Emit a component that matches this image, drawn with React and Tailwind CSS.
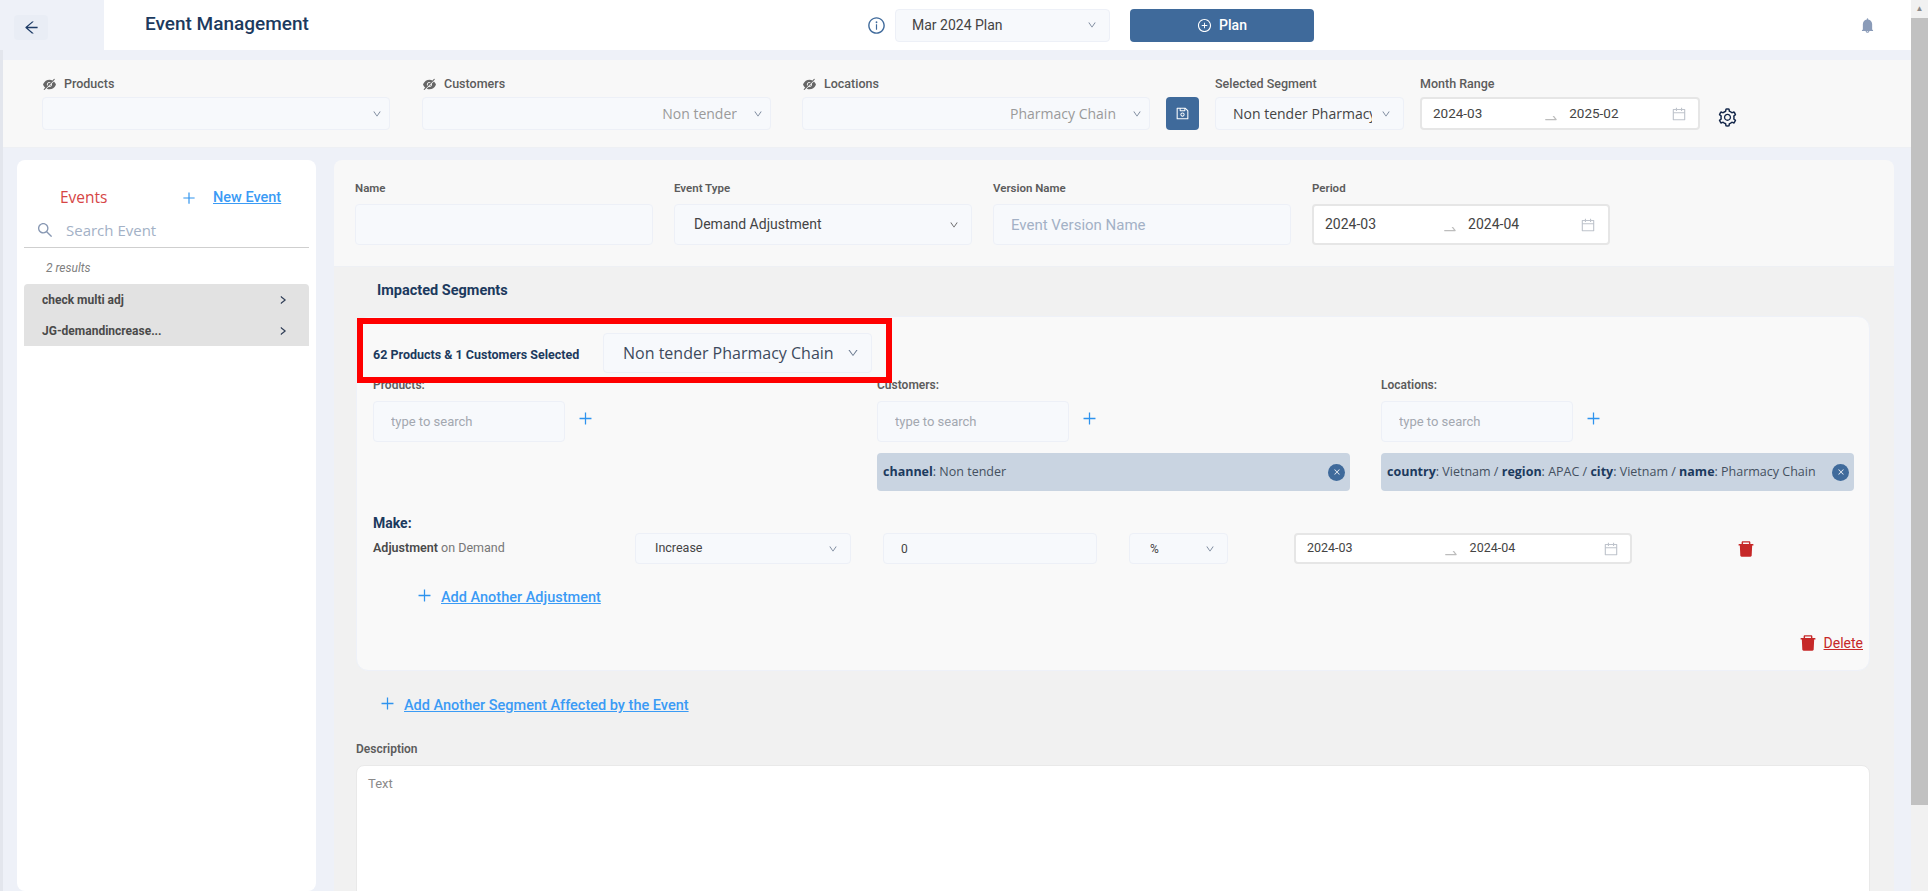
import React from 'react';
import {
  AiFillBell,
  AiFillDelete,
  AiFillEyeInvisible,
  AiOutlineArrowLeft,
  AiOutlineCalendar,
  AiOutlineClose,
  AiOutlineDown,
  AiOutlineInfoCircle,
  AiOutlinePlus,
  AiOutlinePlusCircle,
  AiOutlineRight,
  AiOutlineSave,
  AiOutlineSearch,
  AiOutlineSetting,
  AiOutlineSwapRight,
} from 'react-icons/ai';

const inputBox = 'flex items-center bg-[#f7f9fc] border border-[#edf0f7] rounded';
const formLabel = 'h-[14px] mb-[9px] leading-[14px] text-[11.5px] font-semibold text-[#5c5c5c]';
const filterLabel = 'h-[14px] mb-[6px] leading-[14px] text-[12.5px] font-medium text-[#5c5c5c]';

const Select = ({ value, className = '', textClass = '', right = false, chevron = 'text-[10px] text-[#6b7a90]' }) => (
  <div className={`${inputBox} ${className}`}>
    <span className={`flex-1 min-w-0 overflow-hidden whitespace-nowrap ${right ? 'text-right' : ''} ${textClass}`}>
      {value}
    </span>
    <AiOutlineDown className={`shrink-0 ${chevron}`} />
  </div>
);

const RangePicker = ({ from, to, className = '', toClass = '', arrowClass = '' }) => (
  <div className={`flex items-center bg-white border-2 border-[#e6e6e6] rounded-sm text-[#444] ${className}`}>
    <span>{from}</span>
    <AiOutlineSwapRight className={`text-[#bdbdbd] text-[16px] mt-2 ${arrowClass}`} />
    <span className={toClass}>{to}</span>
    <AiOutlineCalendar className="ml-auto text-[#bfc4cc] text-[16px]" />
  </div>
);

const FilterField = ({ label, value, className }) => (
  <div className={className}>
    <div className="flex items-center gap-[7px] h-[14px] mb-[6px] text-[12.5px] font-medium text-[#5c5c5c]">
      <AiFillEyeInvisible className="text-[15px] text-[#666]" />
      {label}
    </div>
    <Select
      value={value}
      right
      className="h-[33px] pl-3 pr-[7px] gap-[16px]"
      textClass="text-[14px] text-[#9a9a9a] font-['Open_Sans',sans-serif]"
    />
  </div>
);

const SearchField = ({ label, children }) => (
  <div>
    <div className="h-[14px] leading-[14px] text-[12px] font-semibold text-[#5c5c5c]">{label}</div>
    <div className="flex items-center mt-[9px]">
      <input
        placeholder="type to search"
        className={`${inputBox} w-[192px] h-[41px] pl-[17px] text-[13px] outline-none placeholder:text-[#a3a8b0]`}
      />
      <AiOutlinePlus className="ml-[12px] -mt-[6px] text-[17px] text-[#2e93ee]" />
    </div>
    {children}
  </div>
);

const Chip = ({ children }) => (
  <div className="flex items-center justify-between h-[38px] w-[473px] mt-[11px] pl-[6px] pr-[5px] bg-[#c9d4e1] rounded text-[12.5px] text-[#44505f] font-['Open_Sans',sans-serif]">
    <span>{children}</span>
    <span className="flex items-center justify-center w-[17px] h-[17px] rounded-full bg-[#3f6a9b] text-white">
      <AiOutlineClose className="text-[8px]" />
    </span>
  </div>
);

const AddLink = ({ children, className = '' }) => (
  <div className={`flex items-center gap-[8px] text-[14.5px] font-medium text-[#3b9bf5] ${className}`}>
    <AiOutlinePlus className="text-[17px] text-[#2e93ee] -mt-1" />
    <span className="underline">{children}</span>
  </div>
);

const EventRow = ({ name }) => (
  <div className="flex items-center justify-between h-[31px] pl-[18px] pr-[21px] text-[12px] font-bold text-[#4a4a4a]">
    {name}
    <AiOutlineRight className="text-[10px] text-[#1f2f4a] stroke-[40]" />
  </div>
);

export default function App() {
  return (
    <div className="flex w-[1928px] h-[891px] overflow-hidden bg-[#eef1f8] font-['Roboto',sans-serif]">
      <div className="w-[1911px] shrink-0 flex flex-col">
        {/* Top bar */}
        <header className="flex h-[50px] shrink-0">
          <div className="w-[104px] pl-[14px] pt-[15px] bg-[#eef1f8]">
            <div className="flex items-center justify-center w-[34px] h-[25px] bg-[#e9edf5] rounded text-[#1d3b66]">
              <AiOutlineArrowLeft className="text-[17px]" />
            </div>
          </div>
          <div className="flex-1 flex items-center bg-white pl-[41px]">
            <h1 className="w-[722px] -mt-[2px] text-[19px] font-medium text-[#1c3a5e] whitespace-nowrap">Event Management</h1>
            <AiOutlineInfoCircle className="text-[19px] text-[#3f6a9b]" />
            <Select
              value="Mar 2024 Plan"
              className="w-[215px] h-[33px] ml-[9px] pl-[16px] pr-[12px]"
              textClass="text-[14px] text-[#444]"
            />
            <button className="flex items-center justify-center gap-[7px] w-[184px] h-[33px] ml-[20px] bg-[#3f6a9b] rounded-sm text-white text-[14px] font-medium">
              <AiOutlinePlusCircle className="text-[15px]" />
              Plan
            </button>
            <AiFillBell className="ml-[545px] text-[17px] text-[#8a9bb8]" />
          </div>
        </header>

        <div className="flex-1 min-h-0 flex flex-col pt-[10px] border-l-[3px] border-[#e3e6ed]">
          {/* Filters */}
          <section className="flex h-[88px] shrink-0 pl-[39px] pt-[17px] bg-[#f8f8f8] border-b border-[#eef0f4]">
            <FilterField label="Products" value="" className="w-[348px]" />
            <FilterField label="Customers" value="Non tender" className="w-[349px] ml-[32px]" />
            <FilterField label="Locations" value="Pharmacy Chain" className="w-[348px] ml-[31px]" />
            <button className="flex items-center justify-center w-[33px] h-[33px] mt-[20px] ml-[16px] bg-[#3f6a9b] rounded text-white">
              <AiOutlineSave className="text-[15px]" />
            </button>
            <div className="w-[189px] ml-[16px]">
              <div className={filterLabel}>Selected Segment</div>
              <Select
                value="Non tender Pharmacy Chain"
                className="h-[33px] pl-[17px] pr-[12px] gap-[9px]"
                textClass="text-[14px] text-[#444] font-['Open_Sans',sans-serif]"
              />
            </div>
            <div className="w-[280px] ml-[16px]">
              <div className={filterLabel}>Month Range</div>
              <RangePicker
                from="2024-03"
                to="2025-02"
                className="h-[33px] pl-[11px] pr-[11px] text-[13.5px]"
                arrowClass="ml-[61px]"
                toClass="ml-[10px]"
              />
            </div>
            <AiOutlineSetting className="mt-[30px] ml-[17px] text-[21px] text-[#14274a]" />
          </section>

          <div className="flex-1 min-h-0 flex pt-[12px] pl-[14px] pr-[17px] gap-[18px]">
            {/* Events list */}
            <aside className="w-[299px] shrink-0 bg-white rounded-lg px-[7px]">
              <div className="flex items-center h-[56px] pt-[19px] pl-[36px]">
                <span className="w-[121px] text-[15.5px] text-[#d64545] font-['Open_Sans',sans-serif]">Events</span>
                <AiOutlinePlus className="text-[16px] text-[#2e93ee]" />
                <span className="ml-[16px] text-[14.5px] font-medium text-[#3b9bf5] underline">New Event</span>
              </div>
              <div className="flex items-center gap-[12px] h-[24px] pl-[12px] mt-[2px]">
                <AiOutlineSearch className="text-[18px] text-[#8898b3]" />
                <span className="text-[15px] text-[#a3b1c6] font-['Open_Sans',sans-serif]">Search Event</span>
              </div>
              <div className="h-px mt-[5px] bg-[#cfcfcf]" />
              <div className="h-[36px] pt-[13px] pl-[22px] text-[12px] leading-[14px] italic text-[#808080]">2 results</div>
              <div className="bg-[#e2e2e2] rounded-t">
                <EventRow name="check multi adj" />
                <EventRow name="JG-demandincrease..." />
              </div>
            </aside>

            {/* Event form */}
            <main className="flex-1 min-w-0 bg-[#f8f8f8] rounded-t-lg overflow-hidden">
              <section className="flex gap-[21px] h-[107px] pl-[21px] pt-[21px] border-b border-[#eef0f4]">
                <div className="w-[298px]">
                  <div className={formLabel}>Name</div>
                  <input className={`${inputBox} w-full h-[41px]`} />
                </div>
                <div className="w-[298px]">
                  <div className={formLabel}>Event Type</div>
                  <Select
                    value="Demand Adjustment"
                    className="h-[41px] pl-[19px] pr-[12px]"
                    textClass="text-[14px] text-[#444]"
                    chevron="text-[10px] text-[#555]"
                  />
                </div>
                <div className="w-[298px]">
                  <div className={formLabel}>Version Name</div>
                  <input
                    placeholder="Event Version Name"
                    className={`${inputBox} w-full h-[41px] pl-[17px] text-[15px] outline-none placeholder:text-[#a3b1c6]`}
                  />
                </div>
                <div className="w-[298px]">
                  <div className={formLabel}>Period</div>
                  <RangePicker
                    from="2024-03"
                    to="2024-04"
                    className="h-[41px] pl-[11px] pr-[12px] text-[14px]"
                    arrowClass="ml-[66px]"
                    toClass="ml-[10px]"
                  />
                </div>
              </section>

              <section className="h-full bg-[#f1f1f1] pl-[22px] pr-[24px]">
                <h2 className="h-[49px] pl-[21px] pt-[16px] leading-[16px] text-[14.5px] font-bold text-[#1c3a5e]">Impacted Segments</h2>

                <div className="relative h-[355px] bg-[#f9f9f9] border border-[#eef1f8] rounded-xl pl-[16px] pr-[15px] pt-[16px]">
                  {/* annotation box */}
                  <div className="absolute left-0 top-[1px] w-[535px] h-[65px] border-[6px] border-[#ff0000]" />

                  <div className="flex items-center h-[40px]">
                    <span className="w-[230px] text-[12.5px] font-bold text-[#1c3a5e] whitespace-nowrap pt-1">62 Products &amp; 1 Customers Selected</span>
                    <Select
                      value="Non tender Pharmacy Chain"
                      className="w-[269px] h-[40px] pl-[19px] pr-[12px]"
                      textClass="text-[16px] font-medium text-[#3d4a5c] font-['Open_Sans',sans-serif]"
                      chevron="text-[12px] text-[#6b7a90]"
                    />
                  </div>

                  <div className="grid grid-cols-[504px_504px_1fr] mt-[5px] h-[113px]">
                    <SearchField label="Products:" />
                    <SearchField label="Customers:">
                      <Chip>
                        <b className="text-[#1c3a5e]">channel</b>: Non tender
                      </Chip>
                    </SearchField>
                    <SearchField label="Locations:">
                      <Chip>
                        <b className="text-[#1c3a5e]">country</b>: Vietnam / <b className="text-[#1c3a5e]">region</b>: APAC / <b className="text-[#1c3a5e]">city</b>: Vietnam / <b className="text-[#1c3a5e]">name</b>: Pharmacy Chain
                      </Chip>
                    </SearchField>
                  </div>

                  <div className="mt-[23px] h-[18px] leading-[18px] text-[14px] font-bold text-[#1c3a5e]">Make:</div>
                  <div className="flex items-center h-[31px] mt-[1px]">
                    <span className="w-[262px] text-[12.5px] text-[#777]">
                      <b className="font-semibold text-[#4a4a4a]">Adjustment</b> on Demand
                    </span>
                    <Select
                      value="Increase"
                      className="w-[216px] h-[31px] pl-[19px] pr-[12px]"
                      textClass="text-[12.5px] text-[#444]"
                    />
                    <input
                      defaultValue="0"
                      className={`${inputBox} w-[214px] h-[31px] ml-[32px] pl-[17px] text-[12px] text-[#444] outline-none`}
                    />
                    <Select
                      value="%"
                      className="w-[99px] h-[31px] ml-[32px] pl-[20px] pr-[12px]"
                      textClass="text-[12px] text-[#444]"
                    />
                    <RangePicker
                      from="2024-03"
                      to="2024-04"
                      className="w-[338px] h-[31px] ml-[66px] pl-[11px] pr-[11px] text-[12.5px]"
                      arrowClass="ml-[90px]"
                      toClass="ml-[11px]"
                    />
                    <AiFillDelete className="ml-[104px] text-[20px] text-[#c62828]" />
                  </div>

                  <AddLink className="ml-[43px] mt-[23px]">Add Another Adjustment</AddLink>

                  <div className="flex items-center justify-end gap-[6px] -mr-[9px] mt-[24px] text-[14px] text-[#c62828]">
                    <AiFillDelete className="text-[20px]" />
                    <span className="underline">Delete</span>
                  </div>
                </div>

                <AddLink className="ml-[23px] mt-[24px]">Add Another Segment Affected by the Event</AddLink>

                <div className="mt-[25px] h-[14px] leading-[14px] text-[12px] font-semibold text-[#5c5c5c]">Description</div>
                <textarea
                  placeholder="Text"
                  className="block w-full h-[200px] mt-[9px] px-[11px] py-[8px] bg-white border border-[#e9e9e9] rounded-lg text-[13px] outline-none resize-none placeholder:text-[#8a8a8a]"
                />
              </section>
            </main>
          </div>
        </div>
      </div>

      {/* Browser scrollbar */}
      <div className="flex-1 flex flex-col items-stretch bg-[#f1f1f1]">
        <div className="flex items-center justify-center h-[18px] text-[8px] leading-none text-[#8a8a8a]">▲</div>
        <div className="w-full h-[787px] bg-[#c1c1c1]" />
      </div>
    </div>
  );
}
